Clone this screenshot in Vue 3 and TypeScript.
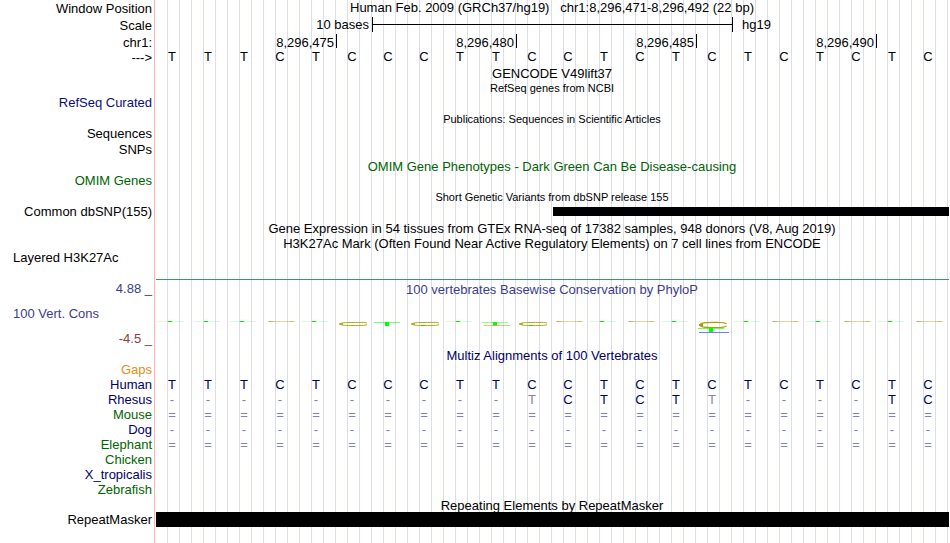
<script setup lang="ts">
type Tone = 'navy' | 'green' | 'orange'

interface Species {
  name: string
  tone: Tone
  bases: string
}

const guideCount = 66
const sequence = 'TTTCTCCCTTCCTCTCTCTCTC'
const bases: string[] = sequence.split('')
const positions: string[] = ['8,296,475', '8,296,480', '8,296,485', '8,296,490']

const species: Species[] = [
  { name: 'Gaps', tone: 'orange', bases: '' },
  { name: 'Human', tone: 'navy', bases: sequence },
  { name: 'Rhesus', tone: 'navy', bases: '----------tCTCTt----TC' },
  { name: 'Mouse', tone: 'green', bases: '='.repeat(22) },
  { name: 'Dog', tone: 'navy', bases: '-'.repeat(22) },
  { name: 'Elephant', tone: 'green', bases: '='.repeat(22) },
  { name: 'Chicken', tone: 'green', bases: '' },
  { name: 'X_tropicalis', tone: 'navy', bases: '' },
  { name: 'Zebrafish', tone: 'green', bases: '' },
]

// Lowercase marks a substitution and is drawn as a faint capital.
const cellsOf = (s: Species): string[] => s.bases.padEnd(22).split('')
const isFaint = (c: string): boolean => /[-=t]/.test(c)

// Conservation logo per base: t and c are flat columns, capitals are taller stacks.
const logo: string[] = 'tttctOTCtMCctctBtctctc'.split('')
</script>

<template>
  <main class="viewer">
    <div class="guides" aria-hidden="true">
      <div class="edge"></div>
      <div class="lines"><i v-for="n in guideCount" :key="n"></i></div>
    </div>

    <div class="tracks">
      <section class="ruler">
        <div class="row tall">
          <div class="label">Window Position</div>
          <div class="title">Human Feb. 2009 (GRCh37/hg19) &nbsp; chr1:8,296,471-8,296,492 (22 bp)</div>
        </div>
        <div class="row tall">
          <div class="label">Scale</div>
          <div class="cells">
            <span class="scale-text">10 bases</span>
            <span class="scale-bar"><i></i></span>
            <span class="assembly">hg19</span>
          </div>
        </div>
        <div class="row">
          <div class="label">chr1:</div>
          <div class="cells">
            <span v-for="p in positions" :key="p" class="position">{{ p }}</span>
          </div>
        </div>
        <div class="row tall">
          <div class="label">---&gt;</div>
          <div class="cells">
            <span v-for="(b, i) in bases" :key="i" class="base">{{ b }}</span>
          </div>
        </div>
      </section>

      <section>
        <h2 class="title">GENCODE V49lift37</h2>
        <h2 class="title small">RefSeq genes from NCBI</h2>
        <div class="row item"><div class="label navy">RefSeq Curated</div></div>
      </section>

      <section>
        <h2 class="title small">Publications: Sequences in Scientific Articles</h2>
        <div class="row sub"><div class="label">Sequences</div></div>
        <div class="row item"><div class="label">SNPs</div></div>
      </section>

      <section>
        <h2 class="title tight green">OMIM Gene Phenotypes - Dark Green Can Be Disease-causing</h2>
        <div class="row item"><div class="label green">OMIM Genes</div></div>
      </section>

      <section>
        <h2 class="title small">Short Genetic Variants from dbSNP release 155</h2>
        <div class="row item">
          <div class="label">Common dbSNP(155)</div>
          <div class="cells"><span class="variant"></span></div>
        </div>
      </section>

      <section>
        <h2 class="title">Gene Expression in 54 tissues from GTEx RNA-seq of 17382 samples, 948 donors (V8, Aug 2019)</h2>
        <h2 class="title tight">H3K27Ac Mark (Often Found Near Active Regulatory Elements) on 7 cell lines from ENCODE</h2>
        <div class="row signal"><div class="label start">Layered H3K27Ac</div></div>
        <div class="baseline"></div>
      </section>

      <section class="row conservation">
        <div class="axis">
          <div class="label slate">4.88 _</div>
          <div class="label start slate">100 Vert. Cons</div>
          <div class="label maroon">-4.5 _</div>
        </div>
        <div class="plot">
          <h2 class="plot-title slate">100 vertebrates Basewise Conservation by PhyloP</h2>
          <div class="logos">
            <svg v-for="(k, i) in logo" :key="i" width="36" height="12" viewBox="0 0 36 12" aria-hidden="true">
              <template v-if="k === 't'">
                <rect x="2" y="0" width="26" height="1" fill="#00ff00" opacity=".18" />
                <rect x="12" y="0" width="4" height="1" fill="#00e800" />
              </template>
              <template v-else-if="k === 'c'">
                <rect x="4" y="0" width="27" height="1" fill="#a09600" opacity=".38" />
                <rect x="5" y="0" width="4" height="1" fill="#a09600" opacity=".5" />
                <rect x="26" y="0" width="3" height="1" fill="#a09600" opacity=".4" />
              </template>
              <template v-else-if="k === 'T'">
                <rect x="2" y="1" width="26" height="1" fill="#00ff00" opacity=".55" />
                <rect x="13" y="1" width="4" height="4" fill="#00ff00" />
              </template>
              <template v-else-if="k === 'M'">
                <rect x="2" y="1" width="26" height="1" fill="#00ff00" opacity=".45" />
                <rect x="13" y="1" width="4" height="3" fill="#00ff00" />
                <rect x="4" y="4" width="26" height="1" fill="#a09600" opacity=".5" />
                <rect x="13" y="4" width="4" height="1" fill="#a09600" opacity=".4" />
              </template>
              <template v-else-if="k === 'B'">
                <path d="M30.500 3C29 .9 22 1.400 17 1.400C9 1.400 4 2 4 4C4 6.400 10 6.500 17 6.500C23 6.500 29 6.800 30.500 4.800" fill="none" stroke="#a8a000" stroke-width="1.200" />
                <rect x="3" y="3" width="4" height="2" fill="#a8a000" />
                <rect x="2" y="7" width="26" height="1" fill="#00ff00" opacity=".6" />
                <rect x="13" y="7" width="4" height="4" fill="#00ff00" />
                <rect x="3" y="11" width="30" height="1" fill="#3333ff" opacity=".65" />
              </template>
              <template v-else>
                <path d="M31 2C29 1.100 24 1.500 17 1.500C9 1.500 5 1.600 4 3C5 4.500 10 4.500 17 4.500C24 4.500 29 4.700 31 3.600" fill="none" stroke="#a8a000" stroke-width=".9" />
                <rect x="3" y="2" width="4" height="2" fill="#a8a000" opacity=".7" />
                <rect v-if="k === 'C'" x="13" y="4" width="4" height="1" fill="#00e800" />
              </template>
            </svg>
          </div>
        </div>
      </section>

      <section>
        <h2 class="title tight navy">Multiz Alignments of 100 Vertebrates</h2>
        <div class="alignment">
          <table>
            <tbody>
              <tr v-for="s in species" :key="s.name">
                <th scope="row" :class="s.tone">{{ s.name }}</th>
                <td v-for="(c, i) in cellsOf(s)" :key="i" :class="{ faint: isFaint(c) }">{{ c.toUpperCase() }}</td>
              </tr>
            </tbody>
          </table>
        </div>
      </section>

      <section>
        <h2 class="title tight">Repeating Elements by RepeatMasker</h2>
        <div class="row">
          <div class="label">RepeatMasker</div>
          <div class="repeat"></div>
        </div>
      </section>
    </div>
  </main>
</template>

<style>
body {
  margin: 0;
  background: #fff;
}
</style>

<style scoped>
.viewer {
  display: grid;
  min-height: 100vh;
  overflow: hidden;
  color: #000;
  font: 13px/15px "Liberation Sans", Arial, sans-serif;
}

.guides,
.tracks {
  grid-area: 1 / 1;
  min-width: 0;
}

.guides {
  display: flex;
}

.edge {
  box-sizing: border-box;
  flex: none;
  width: 155px;
  margin-right: 1px;
  border-right: 1px solid #ffb4b4;
}

.lines {
  display: grid;
  flex: 1;
  grid-template-columns: repeat(66, minmax(0, 1fr));
  padding-right: 2px;
}

.lines i {
  border-right: 1px solid #dcdcf5;
}

.row {
  display: flex;
  height: 15px;
}

.row.tall,
.row.item {
  height: 17px;
}

.row.sub {
  height: 16px;
}

.row.signal {
  height: 29px;
}

.label {
  box-sizing: border-box;
  flex: none;
  width: 156px;
  padding-right: 4px;
  text-align: right;
  white-space: nowrap;
}

.ruler .label {
  line-height: 17px;
}

.label.start {
  padding-left: 13px;
  text-align: left;
}

.title {
  flex: 1;
  height: 15px;
  margin: 0;
  padding: 0 2px 0 156px;
  font-size: 13px;
  font-weight: normal;
  text-align: center;
  white-space: nowrap;
}

.row .title {
  padding-left: 0;
}

.title.tight {
  height: 14px;
}

.title.small {
  height: 14px;
  font-size: 11px;
}

.cells {
  display: grid;
  flex: 1;
  grid-template-columns: repeat(22, minmax(0, 1fr));
  padding-right: 2px;
  white-space: nowrap;
}

.scale-text {
  grid-column: 1 / 7;
  padding-right: 3px;
  text-align: right;
}

.scale-bar {
  display: flex;
  grid-column: 7 / 17;
  align-items: center;
  height: 15px;
  margin-right: -1px;
  border: solid #000;
  border-width: 0 1px;
}

.scale-bar i {
  flex: 1;
  height: 1px;
  background: #000;
}

.assembly {
  grid-column: 17 / -1;
  padding-left: 10px;
}

.position {
  grid-column: span 5;
  height: 14px;
  margin-right: -1px;
  padding-right: 2px;
  border-right: 1px solid #000;
  line-height: 17px;
  text-align: right;
}

.base {
  padding-right: 4px;
  text-align: center;
}

.variant {
  grid-column: 12 / -1;
  height: 9px;
  margin: 3px -1px 0 1px;
  background: #000;
}

.baseline {
  height: 1px;
  margin: 0 1px 0 156px;
  background: #3c9664;
}

.conservation {
  height: 67px;
  padding-top: 1px;
}

.axis {
  display: flex;
  flex: none;
  flex-direction: column;
  gap: 10px;
}

.plot {
  flex: 1;
  padding: 1px 2px 0 0;
}

.plot-title {
  margin: 0 0 24px;
  font-size: 13px;
  font-weight: normal;
  text-align: center;
}

.logos {
  display: grid;
  grid-template-columns: repeat(22, minmax(0, 1fr));
}

.logos svg {
  display: block;
}

.alignment {
  padding: 0 2px 1px 0;
}

table {
  width: 100%;
  border-collapse: collapse;
  table-layout: fixed;
}

th,
td {
  height: 15px;
  padding: 0 4px 0 0;
  color: #000064;
  font-weight: normal;
  text-align: center;
}

th {
  width: 152px;
  text-align: right;
}

td.faint {
  color: #8282b4;
}

.repeat {
  flex: 1;
  margin-right: 1px;
  background: #000;
}

.navy {
  color: #0c0c78;
}

h2.navy,
th.navy {
  color: #000064;
}

.green,
th.green {
  color: #006400;
}

.slate {
  color: #3c3c8c;
}

.maroon {
  color: #8c3c3c;
}

.orange,
th.orange {
  color: #e68c14;
}
</style>
